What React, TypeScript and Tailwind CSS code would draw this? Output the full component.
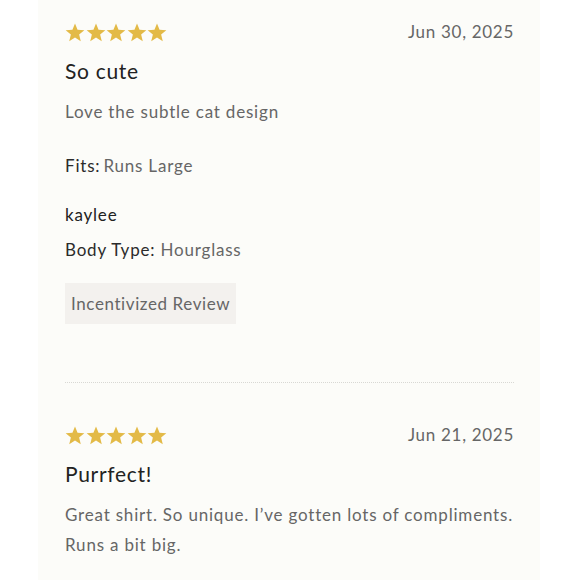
import React from "react";

function Stars() {
  return (
    <div className="flex gap-[0.5px]">
      {[0, 1, 2, 3, 4].map((i) => (
        <svg key={i} width="20" height="19" viewBox="0 0 24 23">
          <path
            d="M12 0.5l3.1 7.6 8.2 0.6-6.3 5.3 2 8-7-4.3-7 4.3 2-8-6.3-5.3 8.2-0.6z"
            fill="#e3ba47"
          />
        </svg>
      ))}
    </div>
  );
}

function Review({
  date,
  title,
  body,
  children,
}: {
  date: string;
  title: string;
  body: React.ReactNode;
  children?: React.ReactNode;
}) {
  return (
    <div className="flex flex-col">
      <div className="flex items-center justify-between h-[20px]">
        <Stars />
        <span className="text-[17px] text-[#666] tracking-[0.7px]">{date}</span>
      </div>
      <div className="mt-[16px] text-[21px] leading-[26px] text-[#222] tracking-[0.7px]">{title}</div>
      <div className="mt-[13px] text-[17px] leading-[30px] text-[#666] tracking-[0.8px]">{body}</div>
      {children}
    </div>
  );
}

export default function App() {
  return (
    <div
      className="w-[580px] h-[580px] bg-white overflow-hidden"
      style={{ fontFamily: "Lato, 'Noto Sans', sans-serif" }}
    >
      <div className="ml-[38px] w-[502px] h-full bg-[#fcfcf9] pl-[27px] pr-[26px] pt-[22px]">
        <Review date="Jun 30, 2025" title="So cute" body="Love the subtle cat design">
          <div className="mt-[24px] text-[17px] leading-[30px] tracking-[0.8px] flex gap-[3px]">
            <span className="text-[#2b2b2b]">Fits:</span>
            <span className="text-[#666]">Runs Large</span>
          </div>
          <div className="mt-[19px] text-[17px] leading-[30px] text-[#222] tracking-[0.8px]">kaylee</div>
          <div className="mt-[5px] text-[17px] leading-[30px] tracking-[0.8px]">
            <span className="text-[#2b2b2b]">Body Type:</span>{" "}
            <span className="text-[#666]">Hourglass</span>
          </div>
          <div className="mt-[18px] self-start bg-[#f3f1ee] px-[6px] h-[41px] flex items-center text-[17px] text-[#666] tracking-[0.6px]">
            Incentivized Review
          </div>
          <div className="mt-[58px] border-t border-dotted border-[#d8d8d4]" />
        </Review>
        <div className="mt-[42px]">
          <Review
            date="Jun 21, 2025"
            title="Purrfect!"
            body={
              <>
                <span className="whitespace-nowrap">Great shirt. So unique. I’ve gotten lots of compliments.</span>
                <br />
                Runs a bit big.
              </>
            }
          />
        </div>
      </div>
    </div>
  );
}
